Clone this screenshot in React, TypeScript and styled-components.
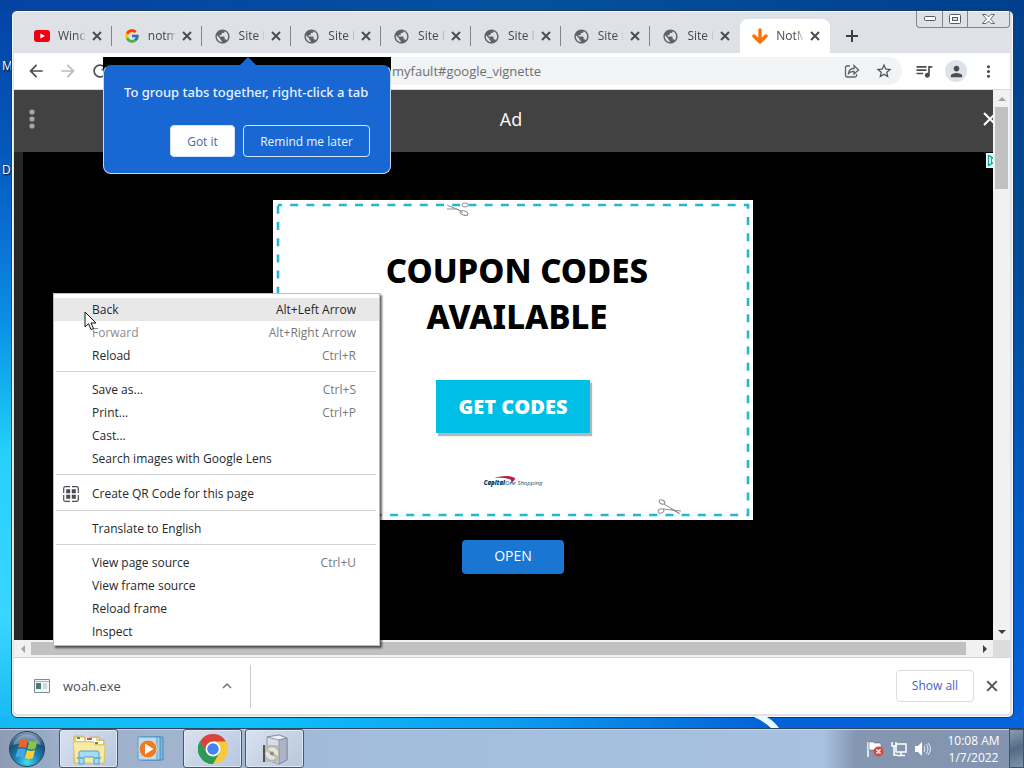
import React from "react";
import styled, { createGlobalStyle, css } from "styled-components";
import {
  MdArrowBack,
  MdArrowForward,
  MdRefresh,
  MdStarBorder,
  MdQueueMusic,
  MdPerson,
  MdMoreVert,
  MdPublic,
  MdExpandLess,
} from "react-icons/md";
import { FcGoogle } from "react-icons/fc";

const GlobalStyle = createGlobalStyle`
  * { box-sizing: border-box; }
  body { margin: 0; font-family: "Open Sans", "Noto Sans", sans-serif; font-size: 12px; color: #202124; }
  button, input { font: inherit; color: inherit; margin: 0; padding: 0; border: 0; background: none; }
  svg { display: block; flex: none; }
`;

const Desktop = styled.div`
  position: relative;
  display: flex;
  flex-direction: column;
  min-height: 100vh;
  overflow: hidden;
  background: #0a6fdc;
`;

const Workspace = styled.div`
  position: relative;
  flex: 1;
  display: grid;
  grid-template-columns: 11px minmax(0, 1fr) 10px;
  padding: 10px 0;
  background:
    linear-gradient(90deg, #0443a4, #04519f 50%, #003f8c) top / 100% 12px no-repeat,
    linear-gradient(90deg, #16b8f2, #10c0fa 25%, #0c9cf0 50%, #0461d8 75%, #0463dc) bottom / 100% 12px no-repeat,
    linear-gradient(180deg, #0443a4, #0557ba 20%, #0a6fd2 32%, #0a8fe4 44%, #14b4ee 54%, #26d0fa 62%, #38d6ff 85%, #16b8f2) left / 50% 100% no-repeat,
    linear-gradient(180deg, #003f8c, #00488f 30%, #0058bd 65%, #0463dc) right / 50% 100% no-repeat;
`;

const Streak = styled.svg`
  position: absolute;
  right: 240px;
  bottom: 0;
`;

const DesktopLabels = styled.div`
  display: flex;
  flex-direction: column;
  gap: 88px;
  padding: 48px 0 0 2px;
  overflow: hidden;
  color: #fff;
  line-height: 16px;
  text-shadow: 1px 1px 2px #000;
`;

const Window = styled.main`
  display: flex;
  flex-direction: column;
  min-width: 0;
  padding: 0 3px 3px 2px;
  border: 1px solid #1b3c63;
  border-radius: 6px;
  background: #dee1e6;
  box-shadow: inset 0 0 0 1px #f4f6f8;
`;

const TabStrip = styled.div`
  display: flex;
  align-items: flex-end;
  height: 42px;
  padding-left: 8px;
`;

const Tabs = styled.div`
  flex: 0 1 808px;
  display: grid;
  grid-template-columns: repeat(9, minmax(0, 1fr));
`;

const TabBox = styled.div<{ $active?: boolean; $last?: boolean }>`
  position: relative;
  display: flex;
  align-items: center;
  height: 34px;
  padding: 0 9px 0 12px;
  color: #45494d;
  border-radius: 8px 8px 0 0;
  ${(p) => p.$active && css`background: #fff;`}
  &::after {
    content: "";
    position: absolute;
    right: 0;
    top: 7px;
    width: 1px;
    height: 20px;
    background: ${(p) => (p.$active || p.$last ? "transparent" : "#80868b")};
  }
`;

const TabTitle = styled.span`
  flex: 1;
  margin: 0 6px 0 8px;
  overflow: hidden;
  white-space: nowrap;
  line-height: 18px;
  mask-image: linear-gradient(90deg, #000 70%, rgba(0, 0, 0, 0.2));
`;

const IconButton = styled.button<{ $size?: number; $round?: boolean }>`
  display: grid;
  place-items: center;
  flex: none;
  width: ${(p) => p.$size ?? 28}px;
  height: ${(p) => p.$size ?? 28}px;
  color: #4a4d51;
  ${(p) => p.$round && css`
    border-radius: 50%;
    background: #dfe2ea;
  `}
`;

const NewTab = styled(IconButton)`
  margin: 0 0 3px 8px;
`;

const Caption = styled.div`
  display: grid;
  grid-template-columns: 25px 25px 42px;
  align-self: flex-start;
  height: 17px;
  margin-left: auto;
  border: 1px solid #80868e;
  border-top: 0;
  border-radius: 0 0 4px 4px;
`;

const CaptionButton = styled.button`
  display: grid;
  place-items: center;
  & + & { border-left: 1px solid #80868e; }
`;

const Toolbar = styled.div`
  display: flex;
  align-items: center;
  height: 37px;
  padding: 0 8px;
  background: #fff;
  border-bottom: 1px solid #d8dade;
`;

const NavButtons = styled.div`
  display: flex;
  gap: 4px;
`;

const Address = styled.div`
  flex: 1;
  display: flex;
  align-items: center;
  gap: 4px;
  height: 28px;
  margin: 0 8px 0 4px;
  padding-right: 4px;
  border-radius: 14px;
  background: #f1f3f4;
`;

const AddressInput = styled.input`
  flex: 1;
  min-width: 0;
  height: 28px;
  padding-left: 274px;
  font-size: 13px;
  color: #6c7075;
  outline: none;
`;

const ToolbarActions = styled.div`
  display: flex;
  align-items: center;
  gap: 7px;
`;

const Viewport = styled.div`
  flex: 1;
  display: grid;
  grid-template-columns: minmax(0, 1fr) 17px;
  grid-template-rows: minmax(0, 1fr) 17px;
  min-height: 500px;
`;

const Page = styled.div`
  display: flex;
  flex-direction: column;
  overflow: hidden;
  background: #262626;
`;

const AdHeader = styled.header`
  display: flex;
  align-items: center;
  justify-content: space-between;
  height: 62px;
  margin-right: -14px;
  padding: 0 7px 4px;
  background: #424242;
  color: #fff;
`;

const AdTitle = styled.h1`
  margin: 0;
  font-size: 18px;
  font-weight: 500;
  line-height: 24px;
`;

const AdBody = styled.div`
  position: relative;
  flex: 1;
  display: flex;
  flex-direction: column;
  align-items: center;
  gap: 20px;
  margin: 0 -10px 0 9px;
  padding-top: 48px;
  background: #000;
`;

const AdChoices = styled.svg`
  position: absolute;
  right: 2px;
  top: 1px;
`;

const Coupon = styled.section`
  position: relative;
  display: flex;
  flex-direction: column;
  align-items: center;
  width: 480px;
  height: 320px;
  padding-top: 48px;
  background: #fff;
`;

const CouponFrame = styled.svg`
  position: absolute;
  inset: 0;
`;

const CouponTitle = styled.h2`
  margin: 0 0 40px;
  padding-left: 8px;
  font-family: "Noto Sans", "Open Sans", sans-serif;
  font-size: 33px;
  font-weight: 800;
  line-height: 46px;
  text-align: center;
  color: #000;
`;

const GetCodes = styled.button`
  position: relative;
  width: 154px;
  height: 53px;
  background: #00bfe7;
  box-shadow: 2px 3px 1px #b5b5bd;
  color: #fff;
  font-size: 20px;
  font-weight: 800;
`;

const Brand = styled.div`
  position: relative;
  margin-top: 45px;
  font-size: 6px;
  line-height: 10px;
  font-style: italic;
  color: #24485f;
  b { font-weight: 800; color: #0c3049; }
`;

const Swoosh = styled.svg`
  position: absolute;
  left: 10px;
  top: -2px;
`;

const OpenButton = styled.button`
  width: 102px;
  height: 34px;
  padding-bottom: 3px;
  border-radius: 4px;
  background: #1976d2;
  color: #fff;
  font-size: 14px;
  font-weight: 500;
`;

const ScrollColumn = styled.div`
  display: flex;
  flex-direction: column;
  align-items: center;
  background: #f1f1f1;
`;

const ScrollRow = styled.div`
  display: flex;
  align-items: center;
  background: #f1f1f1;
`;

const ScrollArrow = styled.button`
  display: grid;
  place-items: center;
  flex: none;
  width: 17px;
  height: 17px;
`;

const ThumbY = styled.div`
  width: 13px;
  height: 82px;
  margin-bottom: auto;
  background: #c1c1c1;
`;

const ThumbX = styled.div`
  flex: 1;
  height: 13px;
  margin-right: 10px;
  background: #c1c1c1;
`;

const Corner = styled.div`
  background: #dcdcdc;
`;

const Shelf = styled.footer`
  display: flex;
  align-items: center;
  height: 57px;
  padding: 0 4px 0 20px;
  background: #fff;
  border-top: 1px solid #d5d5d5;
  border-radius: 0 0 4px 4px;
  font-size: 13px;
`;

const Download = styled.button`
  display: flex;
  align-items: center;
  width: 173px;
  gap: 13px;
  color: #4c4f53;
`;

const ShelfDivider = styled.div`
  width: 1px;
  height: 43px;
  margin: 0 auto 0 3px;
  background: #c8cacd;
`;

const ShowAll = styled.button`
  width: 78px;
  height: 32px;
  margin-right: 4px;
  padding-bottom: 2px;
  border: 1px solid #dadce0;
  border-radius: 4px;
  color: #3c66c0;
  font-size: 12px;
  font-weight: 500;
`;

const Bubble = styled.aside`
  position: absolute;
  left: 103px;
  top: 57px;
  width: 288px;
  padding-top: 8px;
  background: #000;
  border-radius: 0 0 8px 8px;
`;

const BubbleArrow = styled.svg`
  position: absolute;
  left: 136px;
  top: 0;
`;

const BubbleBody = styled.div`
  padding: 17px 20px 16px;
  border: 1px solid #c5d8f3;
  border-top-color: #1967d2;
  border-radius: 8px;
  background: #1967d2;
  color: #e8f5ff;
`;

const BubbleText = styled.p`
  margin: 0 0 23px;
  font-family: "Noto Sans", "Open Sans", sans-serif;
  font-size: 13px;
  font-weight: 500;
  line-height: 19px;
  white-space: nowrap;
`;

const BubbleActions = styled.div`
  display: flex;
  justify-content: flex-end;
  gap: 8px;
`;

const BubbleButton = styled.button<{ $primary?: boolean }>`
  height: 32px;
  width: ${(p) => (p.$primary ? 65 : 127)}px;
  border: 1px solid #d4e4fa;
  border-radius: 4px;
  font-weight: 500;
  white-space: nowrap;
  ${(p) => p.$primary && css`
    background: #fff;
    color: #4a68ae;
  `}
`;

const Menu = styled.div`
  position: absolute;
  left: 53px;
  top: 293px;
  width: 327px;
  padding: 4px 0 2px;
  border: 1px solid #bdbdbd;
  background: #fff;
  box-shadow: 2px 2px 2px rgba(0, 0, 0, 0.6);
`;

const MenuItem = styled.button<{ $hover?: boolean; $tall?: boolean }>`
  display: flex;
  align-items: center;
  width: 100%;
  height: ${(p) => (p.$tall ? 25 : 23)}px;
  padding: 0 23px 0 9px;
  text-align: left;
  background: ${(p) => (p.$hover ? "#e8e8e8" : "transparent")};
  color: #26282b;
  &:disabled { color: #8c8c8c; }
`;

const MenuIcon = styled.span`
  width: 29px;
`;

const Shortcut = styled.span<{ $dark?: boolean }>`
  margin-left: auto;
  color: ${(p) => (p.$dark ? "#26282b" : "#77797c")};
`;

const MenuRule = styled.hr`
  height: 1px;
  margin: 4px 3px 6px 2px;
  border: 0;
  background: #d2d2d2;
`;

const Pointer = styled.svg`
  position: absolute;
  left: 84px;
  top: 311px;
`;

const Taskbar = styled.nav`
  display: flex;
  align-items: center;
  height: 40px;
  border-top: 1px solid #2c4661;
  background: linear-gradient(90deg, #8d9bb3 0, #9dafc9 60px, #a2b5d0 200px, #a3bedd 400px, #a7c1df calc(100% - 200px), #8496b0 calc(100% - 168px), #8294af 100%);
  box-shadow: inset 0 1px 0 #c6d3e3;
`;

const StartButton = styled.button`
  margin: 0 13px 0 8px;
`;

const TaskButton = styled.button<{ $open?: boolean }>`
  display: grid;
  place-items: center;
  width: 59px;
  height: 39px;
  margin-right: 3px;
  border: 1px solid ${(p) => (p.$open ? "#47566b" : "transparent")};
  border-radius: 3px;
  ${(p) => p.$open && css`
    background: linear-gradient(135deg, #d9e1ee, #b7c7df);
    box-shadow: inset 0 0 0 1px #e0e8f4;
  `}
`;

const Tray = styled.div`
  display: flex;
  align-items: center;
  gap: 7px;
  margin-left: auto;
`;

const Clock = styled.time`
  width: 71px;
  text-align: center;
  font-size: 12px;
  line-height: 17px;
  color: #fff;
`;

const ShowDesktop = styled.button`
  width: 15px;
  height: 39px;
  border: 1px solid #40546c;
  background: linear-gradient(160deg, #8b9cb1, #536a86 50%, #8094ad);
`;

const Cross = ({ size = 10, width = 2 }: { size?: number; width?: number }) => (
  <svg width={size} height={size} viewBox="0 0 10 10" aria-hidden="true">
    <path d="M1 1 9 9M9 1 1 9" stroke="currentColor" strokeWidth={width} fill="none" />
  </svg>
);

const YouTubeIcon = () => (
  <svg width="16" height="16" viewBox="0 0 16 16">
    <rect y="2" width="16" height="12" rx="3" fill="#f10014" />
    <path d="M6.4 5.4v5.2L11 8z" fill="#fff" />
  </svg>
);

const DownArrowIcon = () => (
  <svg width="16" height="16" viewBox="0 0 16 16">
    <path d="M8 2v11M2 8l6 6 6-6" stroke="#f97306" strokeWidth="3.4" strokeLinecap="round" strokeLinejoin="round" fill="none" />
  </svg>
);

const Scissors = ({ flip }: { flip?: boolean }) => (
  <g fill="none" stroke="#8b8f98" strokeWidth="1">
    {flip ? (
      <>
        <path d="M174 5 188 11M174 9 184 9 190 13" />
        <ellipse cx="191" cy="13" rx="4" ry="2" transform="rotate(18 191 13)" />
        <ellipse cx="192" cy="5" rx="3" ry="2" />
      </>
    ) : (
      <>
        <path d="M391 304 406 313M390 309 408 311M398 309 407 314" />
        <ellipse cx="389" cy="302" rx="3" ry="2" transform="rotate(25 389 302)" />
        <ellipse cx="388" cy="311" rx="3" ry="2" transform="rotate(-15 388 311)" />
      </>
    )}
  </g>
);

const tabs = [
  { title: "Wind", icon: <YouTubeIcon /> },
  { title: "notm", icon: <FcGoogle size={16} /> },
  ...Array.from({ length: 6 }, () => ({ title: "Site N", icon: <MdPublic size={17} color="#5f6368" /> })),
  { title: "NotM", icon: <DownArrowIcon /> },
];

type Entry = { label: string; keys?: string; hover?: boolean; disabled?: boolean; qr?: boolean };

const menuGroups: Entry[][] = [
  [
    { label: "Back", keys: "Alt+Left Arrow", hover: true },
    { label: "Forward", keys: "Alt+Right Arrow", disabled: true },
    { label: "Reload", keys: "Ctrl+R" },
  ],
  [
    { label: "Save as...", keys: "Ctrl+S" },
    { label: "Print...", keys: "Ctrl+P" },
    { label: "Cast..." },
    { label: "Search images with Google Lens" },
  ],
  [{ label: "Create QR Code for this page", qr: true }],
  [{ label: "Translate to English" }],
  [
    { label: "View page source", keys: "Ctrl+U" },
    { label: "View frame source" },
    { label: "Reload frame" },
    { label: "Inspect" },
  ],
];

const QrIcon = () => (
  <svg width="16" height="16" viewBox="0 0 16 16">
    <path d="M.7 5V2.200q0-1.500 1.500-1.500H7M9 .7h4.800q1.500 0 1.500 1.500V7M15.300 9v4.800q0 1.500-1.500 1.500H9M7 15.300H2.200q-1.500 0-1.500-1.500V9M.7 5v2" fill="none" stroke="#4a4d51" strokeWidth="1.200" />
    <path d="M3.200 3.200h4v4h-4zM8.800 3.200h4v4h-4zM3.200 8.800h4v4h-4zM8.800 8.800h4v4h-4z" fill="#4a4d51" />
  </svg>
);

const Triangle = ({ d, faint }: { d: string; faint?: boolean }) => (
  <svg width="8" height="8" viewBox="0 0 8 8">
    <path d={d} fill={faint ? "#a3a3a3" : "#404040"} />
  </svg>
);

const StartOrb = () => (
  <svg width="38" height="38" viewBox="0 0 38 38">
    <defs>
      <radialGradient id="orb" cx="50%" cy="88%" r="85%">
        <stop offset="0" stopColor="#3fe0f4" />
        <stop offset=".4" stopColor="#1a82b4" />
        <stop offset=".75" stopColor="#1c4f78" />
        <stop offset="1" stopColor="#7d9ab5" />
      </radialGradient>
    </defs>
    <circle cx="19" cy="19" r="17.5" fill="url(#orb)" stroke="#26435c" />
    <path d="M5 15a14.5 14.5 0 0 1 28 0q-14-5-28 0z" fill="#d4e4ee" opacity=".4" />
    <path d="M12 10q4-2 8 0l-2 8q-4-2-8 0z" fill="#ee6424" />
    <path d="M21.500 10.500q4 2 8 0l-2 8q-4 2-8 0z" fill="#8ac440" />
    <path d="M9.500 19.500q4-2 8 0l-2 8q-4-2-8 0z" fill="#48a8e6" />
    <path d="M19 20q4 2 8 0l-2 8q-4 2-8 0z" fill="#fccb35" />
  </svg>
);

const FolderIcon = () => (
  <svg width="36" height="32" viewBox="0 0 36 32">
    <path d="M3 3h10l1 3h5V4h9l1 3h4v23H3z" fill="#e9d27b" stroke="#c9ab49" strokeWidth=".7" />
    <path d="M5 5h8v3H5zM15 5h10v3H15zM23 8h9v3h-9z" fill="#fff" />
    <path d="M6 4h3v2H6zM16 5h3v2h-3zM24 9h3v2h-3z" fill="#3a9b51" />
    <path d="M17 5h4v2h-4z" fill="#d25536" />
    <path d="M2 9h20l2 3h10l-1 18H4z" fill="#f7eaa2" stroke="#d8bd5b" strokeWidth=".7" />
    <path d="M8 31V20q0-2 2-2h16q2 0 2 2v11h-5v-7H13v7z" fill="#a6dbf5" stroke="#4d9fd2" />
    <path d="M6 25h6M24 25h6" stroke="#65b6df" strokeWidth="2" />
  </svg>
);

const MediaIcon = () => (
  <svg width="30" height="28" viewBox="0 0 30 28">
    <path d="M8 2h19v23H8z" fill="#78b8dd" stroke="#4b8cb8" />
    <path d="M5 2h19v23H5z" fill="#a5d5ef" stroke="#4b8cb8" />
    <path d="M2 2h19v23H2z" fill="#b9dcf0" stroke="#5d9cc4" />
    <circle cx="12" cy="14" r="9" fill="#f07a1e" stroke="#d2dbe3" />
    <path d="M9 8.500v11l8.500-5.500z" fill="#fff" />
  </svg>
);

const ChromeIcon = () => (
  <svg width="30" height="30" viewBox="0 0 48 48">
    <path d="M24 24 3.200 12A24 24 0 0 1 44.800 12z" fill="#d8453a" />
    <path d="M24 24V12h20.800A24 24 0 0 1 24 48z" fill="#f9c93b" />
    <path d="M24 24 24 48A24 24 0 0 1 3.200 12L13.600 30z" fill="#2b9a52" />
    <path d="M13.600 30 3.200 12 24 12 24 24z" fill="#d8453a" />
    <path d="M13.600 30 3.200 12A24 24 0 0 0 24 48L34.400 30z" fill="#2b9a52" />
    <circle cx="24" cy="24" r="12" fill="#fff" />
    <circle cx="24" cy="24" r="9.300" fill="#4583ed" />
  </svg>
);

const InstallerIcon = () => (
  <svg width="30" height="32" viewBox="0 0 30 32">
    <path d="M7 4 19 2l8 3v22l-8 4-12-4z" fill="#d9dbe6" stroke="#7f8598" strokeWidth=".8" />
    <path d="M7 4 19 7l8-2-8-3z" fill="#eef0f6" stroke="#7d8498" strokeWidth=".8" />
    <path d="M19 7 27 5v22l-8 4z" fill="#aeb3ca" stroke="#7d8498" strokeWidth=".8" />
    <path d="M3 12h3v17H3z" fill="#4d5450" />
    <path d="M5 12h14v17H5z" fill="#b9bdb5" />
    <circle cx="12" cy="20.500" r="6.800" fill="#e3e5df" stroke="#a5aaa1" strokeWidth=".8" />
    <path d="M12 20.500 7 17M12 20.500l5 4" stroke="#c9bb92" strokeWidth="2.500" />
    <circle cx="12" cy="20.500" r="2" fill="#898f91" />
  </svg>
);

export default function App() {
  return (
    <Desktop>
      <GlobalStyle />
      <Workspace>
        <Streak width="30" height="11" viewBox="0 0 30 11">
          <path d="M0 0h13q8 5 12 11H17Q11 5 0 0z" fill="#eaf8ff" />
        </Streak>
        <DesktopLabels>
          <span>M</span>
          <span>D</span>
        </DesktopLabels>
        <Window>
          <TabStrip>
            <Tabs>
              {tabs.map((tab, i) => (
                <TabBox key={i} $active={i === 8} $last={i === 7}>
                  {tab.icon}
                  <TabTitle>{tab.title}</TabTitle>
                  <IconButton $size={12} aria-label="Close tab"><Cross /></IconButton>
                </TabBox>
              ))}
            </Tabs>
            <NewTab aria-label="New tab">
              <svg width="12" height="12" viewBox="0 0 12 12"><path d="M6 0v12M0 6h12" stroke="#3c4043" strokeWidth="2" /></svg>
            </NewTab>
            <Caption>
              <CaptionButton aria-label="Minimize">
                <svg width="12" height="6" viewBox="0 0 12 6"><rect x=".5" y=".5" width="11" height="4" rx="1" fill="#fff" stroke="#555b66" /></svg>
              </CaptionButton>
              <CaptionButton aria-label="Maximize">
                <svg width="12" height="10" viewBox="0 0 12 10"><rect x=".5" y=".5" width="11" height="9" rx="1" fill="#fff" stroke="#555b66" /><rect x="3.500" y="3.500" width="5" height="3" fill="#dee1e6" stroke="#555b66" /></svg>
              </CaptionButton>
              <CaptionButton aria-label="Close">
                <svg width="13" height="10" viewBox="0 0 13 10"><path d="M.5.5h3.500l2.500 2.500L9 .5h3.500L8.500 5l4 4.500H9L6.500 7 4 9.500H.5l4-4.500z" fill="#fff" stroke="#555b66" strokeWidth=".9" /></svg>
              </CaptionButton>
            </Caption>
          </TabStrip>
          <Toolbar>
            <NavButtons>
              <IconButton aria-label="Back"><MdArrowBack size={20} /></IconButton>
              <IconButton aria-label="Forward" disabled><MdArrowForward size={20} color="#b9bbbe" /></IconButton>
              <IconButton aria-label="Reload"><MdRefresh size={20} /></IconButton>
            </NavButtons>
            <Address>
              <AddressInput aria-label="Address" defaultValue="myfault#google_vignette" />
              <IconButton aria-label="Share">
                <svg width="16" height="16" viewBox="0 0 16 16" fill="none" stroke="#5f6368" strokeWidth="1.300">
                  <path d="M6 3H3q-1.500 0-1.500 1.500v8Q1.500 14 3 14h8q1.500 0 1.500-1.500V11" />
                  <path d="M4.500 10.500Q5 5.500 10 5.500V2.500L14.500 7 10 11V8.300Q6.500 8.300 4.500 10.500z" />
                </svg>
              </IconButton>
              <IconButton aria-label="Bookmark"><MdStarBorder size={18} /></IconButton>
            </Address>
            <ToolbarActions>
              <IconButton aria-label="Media controls"><MdQueueMusic size={20} /></IconButton>
              <IconButton $size={22} $round aria-label="Profile"><MdPerson size={17} /></IconButton>
              <IconButton aria-label="Menu"><MdMoreVert size={19} /></IconButton>
            </ToolbarActions>
          </Toolbar>
          <Viewport>
            <Page>
              <AdHeader>
                <IconButton $size={21} aria-label="Ad options">
                  <svg width="6" height="20" viewBox="0 0 6 20" fill="#a5a5a5"><circle cx="3" cy="3" r="2.600" /><circle cx="3" cy="10" r="2.600" /><circle cx="3" cy="17" r="2.600" /></svg>
                </IconButton>
                <AdTitle>Ad</AdTitle>
                <IconButton $size={20} aria-label="Close ad"><svg width="14" height="14" viewBox="0 0 14 14"><path d="m1 1 12 12M13 1 1 13" stroke="#fff" strokeWidth="2" /></svg></IconButton>
              </AdHeader>
              <AdBody>
                <AdChoices width="15" height="15" viewBox="0 0 15 15">
                  <path d="M0 0h15v15H0z" fill="#e8fbfa" />
                  <path d="M2.500 2.500v10L11 7.500z" fill="none" stroke="#12a89d" strokeWidth="1.400" />
                  <path d="M5.500 5v5" stroke="#12a89d" strokeWidth="1.200" />
                </AdChoices>
                <Coupon>
                  <CouponFrame width="480" height="320" viewBox="0 0 480 320">
                    <rect x="5" y="5" width="470" height="310" fill="none" stroke="#27b2d8" strokeWidth="2.600" strokeDasharray="8 8.200" strokeDashoffset="4" />
                    <Scissors flip />
                    <Scissors />
                  </CouponFrame>
                  <CouponTitle>COUPON CODES<br />AVAILABLE</CouponTitle>
                  <GetCodes>GET CODES</GetCodes>
                  <Brand>
                    <Swoosh width="24" height="8" viewBox="0 0 24 8"><path d="M0 2Q14-2 21 2q1 2-5 6 3-4-1-5Q9 1 0 2z" fill="#b51f40" /></Swoosh>
                    <b>Capital</b>One Shopping
                  </Brand>
                </Coupon>
                <OpenButton>OPEN</OpenButton>
              </AdBody>
            </Page>
            <ScrollColumn>
              <ScrollArrow aria-label="Scroll up"><Triangle d="M0 6 4 2l4 4z" faint /></ScrollArrow>
              <ThumbY />
              <ScrollArrow aria-label="Scroll down"><Triangle d="M0 2h8L4 6z" /></ScrollArrow>
            </ScrollColumn>
            <ScrollRow>
              <ScrollArrow aria-label="Scroll left"><Triangle d="M6 0v8L2 4z" faint /></ScrollArrow>
              <ThumbX />
              <ScrollArrow aria-label="Scroll right"><Triangle d="M2 0v8l4-4z" /></ScrollArrow>
            </ScrollRow>
            <Corner />
          </Viewport>
          <Shelf>
            <Download>
              <svg width="16" height="14" viewBox="0 0 16 14"><path d="M.5.5h15v13H.5z" fill="#f4f6f6" stroke="#7d898c" /><path d="M1 2.500h14" stroke="#a8b3b6" /><path d="M2 4h5v6H2z" fill="#43807c" /><path d="M9 5h4M9 7h4M9 9h4" stroke="#b4bcc0" /></svg>
              woah.exe
            </Download>
            <IconButton $size={40} aria-label="Download options"><MdExpandLess size={18} color="#6a6d71" /></IconButton>
            <ShelfDivider />
            <ShowAll>Show all</ShowAll>
            <IconButton aria-label="Close downloads"><Cross size={12} width={1.5} /></IconButton>
          </Shelf>
        </Window>
      </Workspace>

      <Taskbar>
        <StartButton aria-label="Start"><StartOrb /></StartButton>
        <TaskButton $open aria-label="Explorer"><FolderIcon /></TaskButton>
        <TaskButton aria-label="Media Player"><MediaIcon /></TaskButton>
        <TaskButton $open aria-label="Chrome"><ChromeIcon /></TaskButton>
        <TaskButton $open aria-label="Installer"><InstallerIcon /></TaskButton>
        <Tray>
          <svg width="17" height="16" viewBox="0 0 17 16">
            <path d="M1 1v15" stroke="#fff" strokeWidth="1.500" />
            <path d="M2 1q4-1 6 1h6v7H2z" fill="#fff" stroke="#3f5063" strokeWidth=".5" />
            <circle cx="11.500" cy="10.500" r="5" fill="#d9483a" />
            <path d="m9.500 8.500 4 4m0-4-4 4" stroke="#fff" strokeWidth="1.500" />
          </svg>
          <svg width="16" height="16" viewBox="0 0 16 16">
            <path d="M5 3h10v8H5z" fill="#8294af" stroke="#fff" strokeWidth="1.500" />
            <path d="M6 14.500h8M10 11v3M1 1v4h4V1M3 5v9h3" fill="none" stroke="#fff" strokeWidth="1.500" />
          </svg>
          <svg width="17" height="16" viewBox="0 0 17 16">
            <path d="M1 5h3l4-4v14l-4-4H1z" fill="#fff" />
            <path d="M10 5q2 3 0 6M12 3q4 5 0 10M14 2q5 6 0 12" fill="none" stroke="#e9eff6" strokeWidth="1" />
          </svg>
          <Clock>10:08 AM<br />1/7/2022</Clock>
        </Tray>
        <ShowDesktop aria-label="Show desktop" />
      </Taskbar>

      <Bubble>
        <BubbleArrow width="18" height="9" viewBox="0 0 18 9"><path d="M0 9 9 0l9 9z" fill="#1967d2" /></BubbleArrow>
        <BubbleBody>
          <BubbleText>To group tabs together, right-click a tab</BubbleText>
          <BubbleActions>
            <BubbleButton $primary>Got it</BubbleButton>
            <BubbleButton>Remind me later</BubbleButton>
          </BubbleActions>
        </BubbleBody>
      </Bubble>

      <Menu role="menu">
        {menuGroups.map((group, g) => (
          <React.Fragment key={g}>
            {g > 0 && <MenuRule />}
            {group.map((item) => (
              <MenuItem key={item.label} role="menuitem" $hover={item.hover} $tall={item.qr} disabled={item.disabled}>
                <MenuIcon>{item.qr && <QrIcon />}</MenuIcon>
                {item.label}
                {item.keys && <Shortcut $dark={item.hover}>{item.keys}</Shortcut>}
              </MenuItem>
            ))}
          </React.Fragment>
        ))}
      </Menu>
      <Pointer width="13" height="20" viewBox="0 0 13 20">
        <path d="M1 1v15l3.500-3.300L7 18.500l2.500-1L7 12h5z" fill="#fff" stroke="#111" />
      </Pointer>
    </Desktop>
  );
}
